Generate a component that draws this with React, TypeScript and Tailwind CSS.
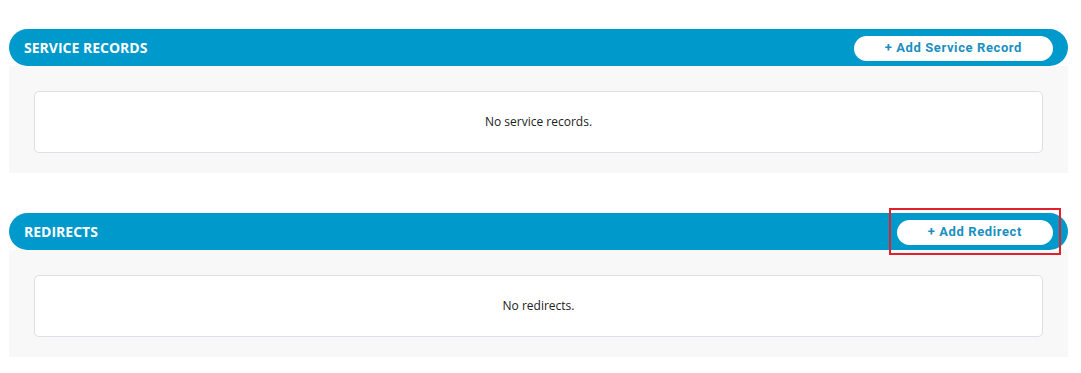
import React from 'react';

interface SectionProps {
  title: string;
  action: string;
  empty: string;
  highlight?: boolean;
}

const Section: React.FC<SectionProps> = ({ title, action, empty, highlight }) => {
  return (
    <section className="w-full">
      <div className="h-[37px] bg-[#0099cc] rounded-full flex items-center justify-between pl-[15px] pr-[15px]">
        <h2 className="text-white font-bold text-[14px] uppercase font-['Open_Sans',sans-serif]">
          {title}
        </h2>
        <div className="relative">
          <button className="h-[25px] bg-white rounded-full text-[#1a8fc2] font-bold text-[13px] tracking-[0.6px] font-['Roboto',sans-serif] px-[31px]">
            + {action}
          </button>
          {highlight && (
            <div className="absolute -left-[8px] -right-[8px] -top-[10px] -bottom-[10px] border-2 border-[#e2202c] pointer-events-none" />
          )}
        </div>
      </div>
      <div className="bg-[#f8f8f9] px-[25px] pt-[25px] pb-[20px]">
        <div className="h-[62px] bg-white border border-[#dde0ea] rounded-[5px] flex items-center justify-center">
          <p className="text-[12px] text-[#222] font-['Open_Sans',sans-serif]">{empty}</p>
        </div>
      </div>
    </section>
  );
};

export default function App() {
  return (
    <div className="w-[1081px] h-[373px] bg-white pt-[29px] pl-[9px] pr-[13px] flex flex-col gap-[40px]">
      <Section title="Service Records" action="Add Service Record" empty="No service records." />
      <Section title="Redirects" action="Add Redirect" empty="No redirects." highlight />
    </div>
  );
}
